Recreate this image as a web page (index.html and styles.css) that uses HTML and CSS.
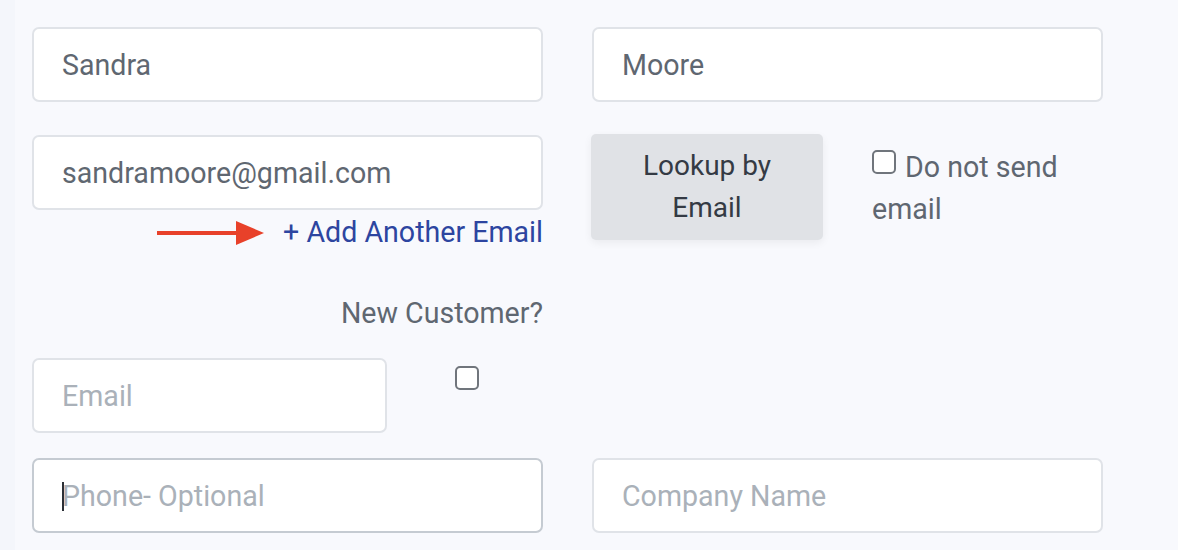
FILE: index.html
```html
<!DOCTYPE html>
<html lang="en">
<head>
<meta charset="utf-8">
<title>Customer form</title>
<link rel="stylesheet" href="styles.css">
</head>
<body>
<div class="strip"></div>
<form class="form">
  <div class="row row-names">
    <input class="field" type="text" value="Sandra">
    <input class="field" type="text" value="Moore">
  </div>

  <div class="row row-email">
    <div class="col">
      <input class="field" type="text" value="sandramoore@gmail.com">
      <div class="add-line">
        <svg class="arrow" width="108" height="28" viewBox="0 0 108 28" aria-hidden="true">
          <rect x="0" y="12" width="82" height="4" fill="#e8412a"/>
          <polygon points="79,2 107,14 79,26" fill="#e8412a"/>
        </svg>
        <a class="add-link" href="#">+ Add Another Email</a>
      </div>
    </div>
    <button type="button" class="lookup">Lookup by<br>Email</button>
    <label class="nosend"><span class="box"></span>Do not send email</label>
  </div>

  <div class="new-cust">New Customer?</div>

  <div class="row row-new">
    <input class="field short" type="text" placeholder="Email">
    <span class="box box-new"></span>
  </div>

  <div class="row row-phone">
    <div class="focus-wrap">
      <input class="field focused" type="text" placeholder="Phone- Optional">
      <span class="caret"></span>
    </div>
    <input class="field" type="text" placeholder="Company Name">
  </div>
</form>
</body>
</html>
```

FILE: styles.css
```css
* { box-sizing: border-box; }

html, body {
  margin: 0;
  padding: 0;
  background: #f8f9fd;
  font-family: Roboto, "Liberation Sans", sans-serif;
  overflow: hidden;
}

body {
  position: relative;
  width: 1178px;
  height: 550px;
}

.strip {
  position: absolute;
  left: 0;
  top: 0;
  width: 15px;
  height: 100%;
  background: #f4f6fb;
}

.form {
  position: relative;
  padding: 27px 0 0 32px;
}

.row {
  display: flex;
  align-items: flex-start;
}

.row-names { gap: 49px; }

.field {
  width: 511px;
  height: 75px;
  border: 2px solid #e0e3e8;
  border-radius: 7px;
  background: #fff;
  padding: 0 0 0 28px;
  font-family: Roboto, "Liberation Sans", sans-serif;
  font-size: 28.6px;
  color: #5f6771;
  outline: none;
  margin: 0;
}

.field::placeholder { color: #aab1b9; }

.field.short { width: 355px; }

.field.focused { border-color: #c5cbd2; }

.row-email { margin-top: 32px; }

.col {
  display: flex;
  flex-direction: column;
  width: 511px;
}

.row-email .col .field { margin-top: 1px; }

.add-line {
  display: flex;
  justify-content: flex-end;
  align-items: center;
  height: 44px;
  gap: 18px;
}

.arrow { display: block; margin-top: 1px; }

.add-link {
  color: #2d45a0;
  text-decoration: none;
  font-size: 28.6px;
  line-height: 44px;
}

.lookup {
  margin-left: 48px;
  width: 232px;
  height: 106px;
  border: none;
  border-radius: 5px;
  background: #e0e2e6;
  box-shadow: 0 3px 8px rgba(0, 0, 0, 0.06);
  color: #343a44;
  font-family: Roboto, "Liberation Sans", sans-serif;
  font-size: 28px;
  line-height: 42px;
  padding: 0;
}

.nosend {
  margin-left: 49px;
  margin-top: 12px;
  width: 200px;
  font-size: 28.6px;
  line-height: 42px;
  color: #5f6771;
}

.box {
  display: inline-block;
  width: 24px;
  height: 24px;
  border: 2px solid #70757c;
  border-radius: 5px;
  background: #fff;
  vertical-align: 3px;
  margin-right: 9px;
}

.new-cust {
  width: 511px;
  text-align: right;
  margin-top: 39px;
  font-size: 28.6px;
  line-height: 40px;
  color: #5f6771;
}

.row-new { margin-top: 25px; }

.box-new {
  margin: 8px 0 0 68px;
}

.row-phone {
  margin-top: 25px;
  gap: 49px;
}

.focus-wrap {
  position: relative;
}

.caret {
  position: absolute;
  left: 30px;
  top: 24px;
  width: 2px;
  height: 29px;
  background: #2b2f36;
}
```
